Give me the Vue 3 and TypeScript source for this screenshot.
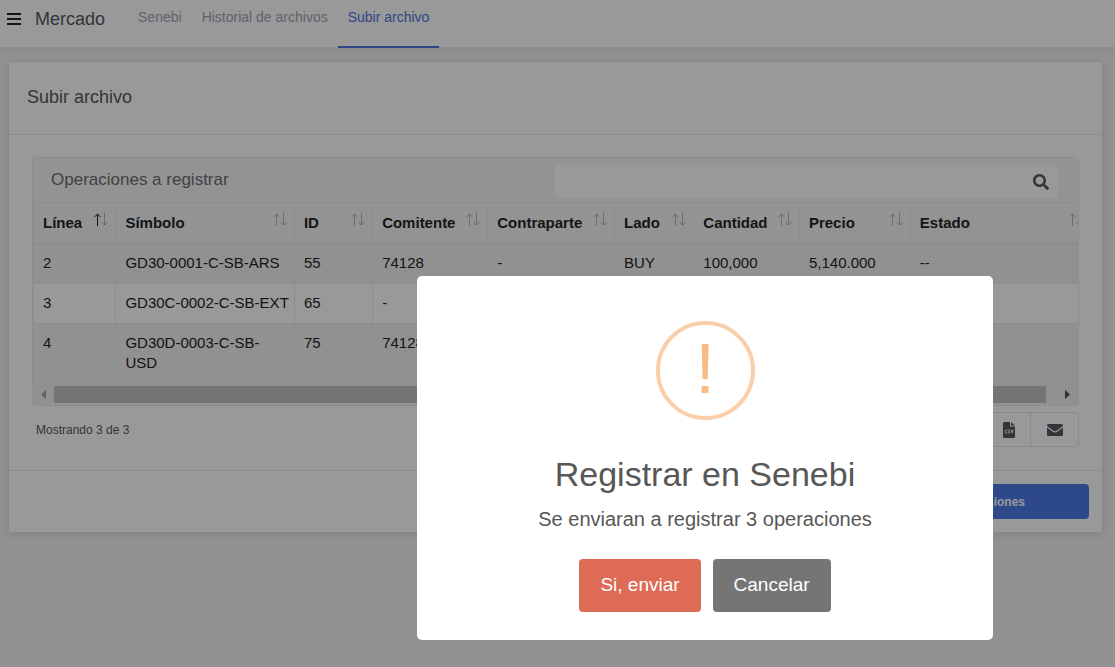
<script setup lang="ts">
import { ref } from 'vue'

interface Column {
  label: string
  width: string
}

const tabs = ['Senebi', 'Historial de archivos', 'Subir archivo']
const activeTab = ref('Subir archivo')
const search = ref('')

const columns: Column[] = [
  { label: 'Línea', width: '7.8%' },
  { label: 'Símbolo', width: '16.9%' },
  { label: 'ID', width: '7.4%' },
  { label: 'Comitente', width: '10.9%' },
  { label: 'Contraparte', width: '12%' },
  { label: 'Lado', width: '7.5%' },
  { label: 'Cantidad', width: '10%' },
  { label: 'Precio', width: '10.5%' },
  { label: 'Estado', width: '17%' },
]
const sorted = 'Línea'

const rows: string[][] = [
  ['2', 'GD30-0001-C-SB-ARS', '55', '74128', '-', 'BUY', '100,000', '5,140.000', '--'],
  ['3', 'GD30C-0002-C-SB-EXT', '65', '-', '', '', '', '', ''],
  ['4', 'GD30D-0003-C-SB-\nUSD', '75', '74128', '', '', '', '', ''],
]
</script>

<template>
  <div class="page">
    <header class="topbar">
      <button class="menu" type="button" aria-label="Menú">
        <svg width="14" height="12" viewBox="0 0 14 12">
          <path d="M0 1h14M0 6h14M0 11h14" stroke="#20222f" stroke-width="2" />
        </svg>
      </button>
      <span class="brand">Mercado</span>
      <nav class="tabs">
        <a
          v-for="tab in tabs"
          :key="tab"
          href="#"
          :class="{ active: tab === activeTab }"
          @click.prevent="activeTab = tab"
        >{{ tab }}</a>
      </nav>
    </header>

    <main class="card">
      <h1 class="card-title">Subir archivo</h1>

      <section class="card-body">
        <div class="panel">
          <div class="panel-head">
            <h2>Operaciones a registrar</h2>
            <div class="search">
              <input v-model="search" type="text" aria-label="Buscar" />
              <svg width="16" height="16" viewBox="0 0 512 512" aria-hidden="true">
                <path
                  fill="#575962"
                  d="M505 442.700L405.300 343c-4.500-4.500-10.600-7-17-7H372c27.600-35.300 44-79.700 44-128C416 93.100 322.900 0 208 0S0 93.100 0 208s93.100 208 208 208c48.300 0 92.700-16.400 128-44v16.300c0 6.400 2.500 12.500 7 17l99.700 99.700c9.400 9.400 24.600 9.400 33.900 0l28.300-28.300c9.400-9.400 9.400-24.600.1-34zM208 336c-70.700 0-128-57.200-128-128 0-70.700 57.200-128 128-128 70.700 0 128 57.200 128 128 0 70.700-57.200 128-128 128z"
                />
              </svg>
            </div>
          </div>

          <div class="table-wrap">
            <table>
              <colgroup>
                <col v-for="c in columns" :key="c.label" :style="{ width: c.width }" />
              </colgroup>
              <thead>
                <tr>
                  <th v-for="c in columns" :key="c.label" scope="col">
                    <button class="sort" type="button">
                      <span>{{ c.label }}</span>
                      <svg width="14" height="14" viewBox="0 0 14 14" fill="none" stroke="#212529">
                        <path :class="{ on: c.label === sorted }" d="M3.500 13V1M.500 4l3-3 3 3" />
                        <path d="M10.500 0v12M7.500 9l3 3 3-3" />
                      </svg>
                    </button>
                  </th>
                </tr>
              </thead>
              <tbody>
                <tr v-for="row in rows" :key="row[0]">
                  <td v-for="(cell, i) in row" :key="i">{{ cell }}</td>
                </tr>
              </tbody>
            </table>
          </div>

          <div class="scrollbar" aria-hidden="true">
            <svg width="21" height="17" viewBox="0 0 21 17">
              <path d="M13 4v9L8 8.500z" fill="#a3a3a3" />
            </svg>
            <span class="thumb"></span>
            <svg width="32" height="17" viewBox="0 0 32 17">
              <path d="M19 4v9l5-4.500z" fill="#505050" />
            </svg>
          </div>
        </div>

        <div class="table-foot">
          <span>Mostrando 3 de 3</span>
          <div class="exports">
            <button type="button" aria-label="Descargar CSV">
              <svg width="12" height="16" viewBox="0 0 12 16">
                <path fill="#575962" d="M1 0h6v4.500h5V15a1 1 0 0 1-1 1H1a1 1 0 0 1-1-1V1a1 1 0 0 1 1-1zM8 0l4 3.500H8z" />
                <path
                  d="M4.300 8.300C3.800 7.600 2.300 7.700 2.300 9.500s1.500 1.900 2 1.200M7.200 8.300C6.500 7.700 5.300 7.900 5.400 8.700 5.500 9.500 7.100 9.300 7 10.300 6.900 11.200 5.600 11.200 5.200 10.600M8.200 7.900l1 3 1-3"
                  fill="none"
                  stroke="#fff"
                  stroke-width="1"
                />
              </svg>
            </button>
            <button type="button" aria-label="Enviar por correo">
              <svg width="16" height="12" viewBox="0 0 16 12">
                <path
                  fill="#575962"
                  d="M1.500 0h13A1.500 1.500 0 0 1 16 1.500V2L9.600 6.700Q8 7.900 6.400 6.700L0 2v-.5A1.500 1.500 0 0 1 1.500 0zM0 3.500l5.700 4.200Q8 9.300 10.300 7.700L16 3.500v7a1.500 1.500 0 0 1-1.500 1.500h-13A1.500 1.500 0 0 1 0 10.500z"
                />
              </svg>
            </button>
          </div>
        </div>
      </section>

      <footer class="card-foot">
        <button class="primary" type="button">Registrar operaciones</button>
      </footer>
    </main>

    <div class="overlay">
      <div class="modal" role="dialog" aria-modal="true" aria-labelledby="dialog-title">
        <div class="warning">!</div>
        <h2 id="dialog-title">Registrar en Senebi</h2>
        <p>Se enviaran a registrar 3 operaciones</p>
        <div class="actions">
          <button class="confirm" type="button">Si, enviar</button>
          <button class="cancel" type="button">Cancelar</button>
        </div>
      </div>
    </div>
  </div>
</template>

<style>
body {
  margin: 0;
  background: #f2f2f2;
}
</style>

<style scoped>
* {
  box-sizing: border-box;
}
.page {
  min-height: 100vh;
  overflow: hidden;
  font-family: 'Liberation Sans', Arial, sans-serif;
  color: #212529;
  background: #f2f2f2;
}
button {
  font-family: inherit;
  margin: 0;
  border: 0;
  cursor: pointer;
}
h1,
h2,
p {
  margin: 0;
  font-weight: 400;
}
.topbar {
  display: flex;
  height: 47px;
  padding-left: 7px;
  background: #fff;
  box-shadow: 0 1px 8px 1px rgba(0, 0, 0, 0.08);
}
.menu {
  display: flex;
  align-items: center;
  height: 37px;
  padding: 0;
  background: none;
}
.brand {
  margin: 0 23px 0 14px;
  font-size: 18px;
  line-height: 38px;
  color: #575962;
}
.tabs {
  display: flex;
}
.tabs a {
  height: 48px;
  padding: 0 10px;
  font-size: 14px;
  line-height: 34px;
  color: #a0a5b5;
  text-decoration: none;
  border-bottom: 2px solid transparent;
}
.tabs a.active {
  color: #4e76e0;
  border-color: #4e76e0;
}
.card {
  margin: 15px 13px 0 9px;
  background: #fff;
  box-shadow: 0 1px 8px 1px rgba(0, 0, 0, 0.1);
}
.card-title {
  padding: 0 18px 1px;
  font-size: 18px;
  line-height: 71px;
  color: #575962;
  border-bottom: 1px solid #ebebeb;
}
.card-body {
  padding: 22px 23px 23px;
}
.panel {
  overflow: hidden;
  padding-bottom: 2px;
  border: 1px solid #ebebeb;
  border-radius: 4px;
  background: #f5f5f5;
}
.panel-head {
  display: flex;
  align-items: center;
  justify-content: space-between;
  height: 45px;
  padding: 3px 20px 0 18px;
  border-bottom: 1px solid #ececec;
}
.panel-head h2 {
  padding-bottom: 4px;
  font-size: 17px;
  color: #6c6e75;
}
.search {
  display: flex;
  align-items: center;
  flex: 0 0 50%;
  height: 33px;
  padding-right: 9px;
  background: #fff;
  border-radius: 3px;
}
.search input {
  flex: 1;
  min-width: 0;
  padding: 0 10px;
  font: inherit;
  border: 0;
  outline: 0;
  background: none;
}
.table-wrap {
  overflow: hidden;
  border-left: 1px solid #ebebeb;
}
table {
  width: 101.2%;
  table-layout: fixed;
  border-collapse: separate;
  border-spacing: 0;
  font-size: 15px;
  line-height: 20px;
}
th,
td {
  padding: 10px 4px 9px 9px;
  text-align: left;
  vertical-align: top;
  border-right: 1px solid #ebebeb;
  border-bottom: 1px solid #ebebeb;
}
th {
  padding-bottom: 10px;
  border-bottom-color: #e4e4e4;
}
td {
  padding-top: 9px;
  padding-bottom: 10px;
  white-space: pre;
}
tbody tr {
  background: #fff;
}
tbody tr:nth-child(odd) {
  background: #f2f2f2;
}
.sort {
  display: flex;
  justify-content: space-between;
  width: 100%;
  padding: 0;
  font-size: 15px;
  line-height: 20px;
  font-weight: 700;
  color: #212529;
  background: none;
}
.sort svg {
  flex: none;
  margin-right: 3px;
}
.sort path {
  opacity: 0.3;
}
.sort path.on {
  opacity: 1;
}
.scrollbar {
  display: flex;
  height: 19px;
  padding-top: 2px;
  background: #f1f1f1;
}
.thumb {
  flex: 1;
  background: #c1c1c1;
}
.table-foot {
  display: flex;
  justify-content: space-between;
  margin-top: 6px;
  padding-left: 4px;
  font-size: 12px;
  line-height: 36px;
  color: #575962;
}
.exports {
  display: flex;
  height: 35px;
  border: 1px solid #e4e4e4;
  border-radius: 4px;
}
.table-foot span {
  height: 35px;
}
.exports button {
  display: flex;
  align-items: center;
  justify-content: center;
  width: 42px;
  padding: 0;
  background: none;
}
.exports button + button {
  width: 48px;
  border-left: 1px solid #e4e4e4;
}
.card-foot {
  display: flex;
  justify-content: flex-end;
  padding: 13px;
  border-top: 1px solid #ebebeb;
}
.primary {
  height: 35px;
  padding: 0 64px;
  font-size: 12px;
  font-weight: 700;
  color: #fff;
  background: #4e7ae6;
  border-radius: 4px;
}
.overlay {
  position: fixed;
  inset: 0;
  display: flex;
  align-items: center;
  justify-content: center;
  padding: 249px 0 0 295px;
  background: rgba(0, 0, 0, 0.4);
}
.modal {
  flex: none;
  display: flex;
  flex-direction: column;
  align-items: center;
  width: 576px;
  padding: 45px 20px 28px;
  background: #fff;
  border-radius: 5px;
  color: #575757;
}
.warning {
  width: 99px;
  height: 99px;
  border: 4px solid #facea8;
  border-radius: 50%;
  font-size: 71px;
  line-height: 87px;
  text-align: center;
  color: #f8bb86;
}
.modal h2 {
  margin-top: 34px;
  font-size: 34px;
  line-height: 40px;
}
.modal p {
  margin-top: 12px;
  font-size: 20px;
  line-height: 26px;
}
.actions {
  display: flex;
  gap: 12px;
  margin-top: 27px;
}
.actions button {
  height: 53px;
  padding: 0 21px 2px;
  font-size: 19px;
  font-weight: 500;
  color: #fff;
  border-radius: 4px;
}
.confirm {
  background: #dd6b55;
}
.cancel {
  background: #757575;
}
</style>
